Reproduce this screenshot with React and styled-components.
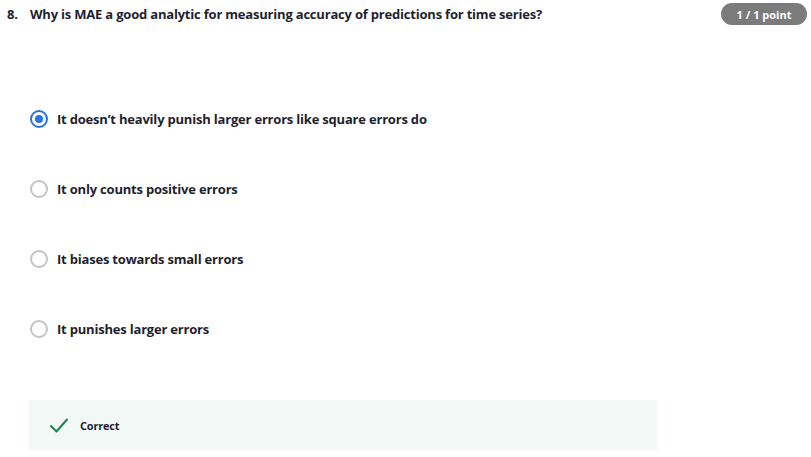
import React from "react";
import styled, { createGlobalStyle } from "styled-components";

const Global = createGlobalStyle`
  html, body { margin: 0; padding: 0; background: #fff; }
  body { font-family: "Open Sans", "Liberation Sans", sans-serif; color: #1f1f2e; }
`;

const Page = styled.div`
  padding: 3px 4px 0 7px;
`;

const Header = styled.div`
  display: flex;
  align-items: center;
  justify-content: space-between;
  height: 22px;
`;

const Question = styled.div`
  display: flex;
  font-size: 13px;
  font-weight: 700;
  line-height: 18px;
  letter-spacing: -0.2px;
  color: #1f1f2e;
`;

const Number = styled.span`
  width: 23px;
  flex: none;
`;

const Badge = styled.span`
  display: inline-flex;
  align-items: center;
  justify-content: center;
  width: 86px;
  height: 22px;
  border-radius: 11px;
  background: #7b7b7b;
  color: #fff;
  font-size: 11px;
  font-weight: 700;
`;

const Options = styled.div`
  display: flex;
  flex-direction: column;
  gap: 52px;
  margin: 85px 0 0 23px;
`;

const Option = styled.label`
  display: flex;
  align-items: center;
  gap: 9px;
  height: 18px;
  font-size: 13px;
  font-weight: 700;
  letter-spacing: -0.2px;
  color: #1f1f2e;
`;

const Radio = styled.span`
  box-sizing: border-box;
  width: 18px;
  height: 18px;
  border-radius: 50%;
  flex: none;
  border: 2px solid ${(p) => (p.$checked ? "#2a73e0" : "#c4c4c4")};
  display: flex;
  align-items: center;
  justify-content: center;
  &::after {
    content: "";
    width: 8px;
    height: 8px;
    border-radius: 50%;
    background: ${(p) => (p.$checked ? "#2a73e0" : "transparent")};
  }
`;

const Feedback = styled.div`
  margin: 62px 0 0 22px;
  width: 628px;
  height: 50px;
  box-sizing: border-box;
  background: #f2f8f6;
  display: flex;
  align-items: center;
  gap: 12px;
  padding-left: 21px;
  font-size: 11px;
  font-weight: 700;
  letter-spacing: -0.2px;
  color: #1f1f2e;
`;

const Check = () => (
  <svg width="18" height="15" viewBox="0 0 18 15" fill="none">
    <path d="M1 8 L6.5 13.5 L17 1.5" stroke="#1f8354" strokeWidth="2" strokeLinecap="round" strokeLinejoin="round" />
  </svg>
);

const options = [
  "It doesn’t heavily punish larger errors like square errors do",
  "It only counts positive errors",
  "It biases towards small errors",
  "It punishes larger errors",
];

export default function App() {
  return (
    <Page>
      <Global />
      <Header>
        <Question>
          <Number>8.</Number>
          <span>Why is MAE a good analytic for measuring accuracy of predictions for time series?</span>
        </Question>
        <Badge>1 / 1 point</Badge>
      </Header>
      <Options>
        {options.map((o, i) => (
          <Option key={i}>
            <Radio $checked={i === 0} />
            {o}
          </Option>
        ))}
      </Options>
      <Feedback>
        <Check />
        Correct
      </Feedback>
    </Page>
  );
}
